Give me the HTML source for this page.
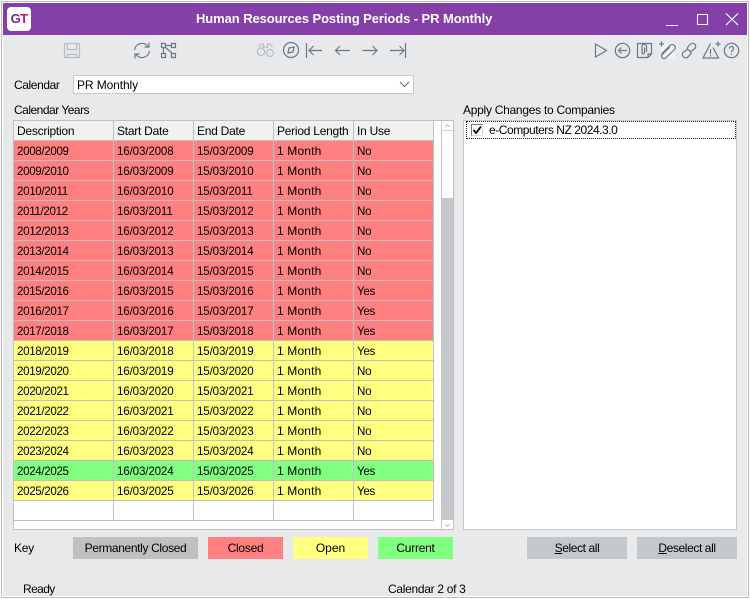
<!DOCTYPE html>
<html><head><meta charset="utf-8"><style>
html,body{margin:0;padding:0}
body{width:750px;height:599px;position:relative;overflow:hidden;background:#fff;font-family:"Liberation Sans",sans-serif;font-size:12px;color:#000}
div{position:absolute;box-sizing:border-box;white-space:nowrap}
svg{position:absolute;left:0;top:0}
table{position:absolute;left:14px;top:121px;border-collapse:separate;border-spacing:0;table-layout:fixed;width:420px}
td{height:20px;box-sizing:border-box;padding:1px 0 0 3px;border-right:1px solid #c0c0c0;border-bottom:1px solid #c0c0c0;font-size:11.6px;white-space:nowrap;overflow:hidden}
td:nth-child(1){letter-spacing:-.35px}
td:nth-child(2),td:nth-child(3){letter-spacing:-.15px}
td:nth-child(4){font-size:12px;letter-spacing:.15px}
td:nth-child(5){letter-spacing:-.3px}
tr.h td{background:#f0f0f0;font-size:12px;letter-spacing:-.25px;padding-top:0}
tr.r td{background:#ff8080}tr.y td{background:#ffff80}tr.g td{background:#80ff80}tr.w td{background:#fff}
.k{top:537px;height:22px;line-height:22px;text-align:center;font-size:12px;letter-spacing:-.25px}
.l{font-size:12px}
</style></head><body>
<div style="left:1px;top:1px;width:748px;height:597px;border:1px solid #bdbdbd"></div>
<div style="left:2px;top:2px;width:746px;height:595px;border:1px solid #fff;background:#e8e9eb"></div>
<div style="left:3px;top:3px;width:744px;height:32px;background:#8440a8"></div>
<div style="left:7px;top:7px;width:24px;height:24px;background:#fff;border-radius:4px"></div>
<div style="left:7px;top:7px;width:24px;height:24px;line-height:24px;text-align:center;font-weight:bold;font-size:13px;letter-spacing:-.6px"><span style="color:#6a2a9e">G</span><span style="color:#c0186e">T</span></div>
<div style="left:196px;top:10px;line-height:18px;color:#fff;font-weight:bold;font-size:13px;letter-spacing:-.08px">Human Resources Posting Periods - PR Monthly</div>

<svg width="750" height="599" fill="none" stroke-width="1.2">
<g stroke="#fff">
<path d="M666 25.500H678M697.500 14.500H707.500V24.500H697.500ZM726 13.500L738 25M738 13.500L726 25" stroke-width="1.100"/>
</g>
<path d="M660 43H675V58H660Z" fill="#f0f1f2"/>
<g stroke="#b9bec4">
<path d="M64.500 43.500H78.500L79.500 44.500V57.500H64.500Z"/><path d="M67.500 43.500V49.500H76.500V43.500M67.500 57.500V54.500H76.500V57.500"/>
<path d="M258.500 47L261 44H263.500V48M272.500 47L270 44H267.500V48M263.500 47H267.500M257.500 50.500A3.500 3.500 0 1 0 264.500 53A3.500 3.500 0 0 0 257.500 50.500ZM266.500 53A3.500 3.500 0 1 0 273.500 53A3.500 3.500 0 0 0 266.500 53Z"/>
</g>
<g stroke="#6b7785">
<path d="M134.500 50A7.500 7.500 0 0 1 148 46.500M149 42.500V47H144.500M149.500 51A7.500 7.500 0 0 1 136 54.500M135 58.500V54H139.500"/>
<path d="M161.500 43.500H165.500V47.500H161.500ZM171.500 43.500H175.500V47.500H171.500ZM161.500 53.500H165.500V57.500H161.500ZM171.500 53.500H175.500V57.500H171.500ZM165.500 45.500H171.500M163.500 47.500V53.500M165 47L172.500 53.500"/>
<circle cx="291" cy="50" r="7.500"/><path d="M288 53L289 48L294 47L293 52Z"/><path d="M291 42V43M291 57V58M283 50H284M298 50H299" stroke-width=".8"/>
<path d="M306.500 43V58M322 50.500H309M313.500 46L309 50.500L313.500 55"/>
<path d="M350 50.500H335.500M340 46L335.500 50.500L340 55"/>
<path d="M362.500 50.500H377M372.500 46L377 50.500L372.500 55"/>
<path d="M390 50.500H404M399.500 46L404 50.500L399.500 55M405.500 43V58"/>
<path d="M595.500 44L606.500 50.500L595.500 57Z"/>
<circle cx="622.500" cy="50.500" r="7.200"/><path d="M627 50.500H618.500M621.500 47.500L618.500 50.500L621.500 53.500"/>
<path d="M637.500 43.500H651.500V54L648 57.500H637.500ZM651.500 54H648V57.500"/><path d="M646.500 52V46.500A2 2 0 0 0 642 46.500V53A1.300 1.300 0 0 0 644.500 53V47.500"/>
<path d="M664 44H659M661.500 41.500V46.500M661.500 54L670 45.500A3 3 0 0 1 674.500 49.500L665.500 58A2.500 2.500 0 0 1 662 54.500L670 47"/>
<path d="M688 49L683.500 52A3.200 3.200 0 0 0 688 57L691 53.500A3 3 0 0 0 689 50.500" stroke-width="1.200"/><path d="M691 51.500L695 48.500A3.200 3.200 0 0 0 690.500 44L687.500 47.500A3 3 0 0 0 689 50.500" stroke-width="1.200"/>
<path d="M710.500 43.500L703 58H718.500L713 47.500M710.500 49V54M710.500 55V56.500M715.500 44H720.500M718 41.500V46.500"/>
<circle cx="731.500" cy="50.500" r="7.200"/><path d="M729.500 48.500A2 2 0 1 1 732 50.500Q731.500 51 731.500 52.500M731.500 54V55"/>
</g>
</svg>

<div class="l" style="left:14px;top:78px;line-height:15px;letter-spacing:-.4px">Calendar</div>
<div style="left:73px;top:75px;width:341px;height:19px;background:#fff;border:1px solid #c8c8c8;line-height:18px;padding-left:3px;letter-spacing:-.1px">PR Monthly</div>
<svg width="750" height="599" fill="none"><path d="M400 82L404.500 86.500L409 82" stroke="#666" stroke-width="1"/></svg>
<div class="l" style="left:14px;top:103px;line-height:15px;letter-spacing:-.5px">Calendar Years</div>
<div class="l" style="left:463px;top:103px;line-height:15px;letter-spacing:-.27px">Apply Changes to Companies</div>

<div style="left:13px;top:120px;width:441px;height:410px;background:#fff;border:1px solid #c0c0c0"></div>
<div style="left:441px;top:121px;width:1px;height:408px;background:#c4c7cb"></div>
<div style="left:442px;top:121px;width:11px;height:408px;background:#fff"></div>
<div style="left:442px;top:198px;width:11px;height:322px;background:#c4c7cb"></div>
<div style="left:442px;top:130px;width:11px;height:1px;background:#d0d0d0"></div>
<svg width="750" height="599" fill="none"><path d="M445 127L447.500 124.500L450 127M445 524L447.500 526.500L450 524" stroke="#c0c0c0" stroke-width="1"/></svg>

<table><colgroup><col style="width:100px"><col style="width:80px"><col style="width:80px"><col style="width:80px"><col style="width:80px"></colgroup>
<tr class="h"><td>Description</td><td>Start Date</td><td>End Date</td><td>Period Length</td><td>In Use</td></tr>
<tr class="r"><td>2008/2009</td><td>16/03/2008</td><td>15/03/2009</td><td>1 Month</td><td>No</td></tr>
<tr class="r"><td>2009/2010</td><td>16/03/2009</td><td>15/03/2010</td><td>1 Month</td><td>No</td></tr>
<tr class="r"><td>2010/2011</td><td>16/03/2010</td><td>15/03/2011</td><td>1 Month</td><td>No</td></tr>
<tr class="r"><td>2011/2012</td><td>16/03/2011</td><td>15/03/2012</td><td>1 Month</td><td>No</td></tr>
<tr class="r"><td>2012/2013</td><td>16/03/2012</td><td>15/03/2013</td><td>1 Month</td><td>No</td></tr>
<tr class="r"><td>2013/2014</td><td>16/03/2013</td><td>15/03/2014</td><td>1 Month</td><td>No</td></tr>
<tr class="r"><td>2014/2015</td><td>16/03/2014</td><td>15/03/2015</td><td>1 Month</td><td>No</td></tr>
<tr class="r"><td>2015/2016</td><td>16/03/2015</td><td>15/03/2016</td><td>1 Month</td><td>Yes</td></tr>
<tr class="r"><td>2016/2017</td><td>16/03/2016</td><td>15/03/2017</td><td>1 Month</td><td>Yes</td></tr>
<tr class="r"><td>2017/2018</td><td>16/03/2017</td><td>15/03/2018</td><td>1 Month</td><td>Yes</td></tr>
<tr class="y"><td>2018/2019</td><td>16/03/2018</td><td>15/03/2019</td><td>1 Month</td><td>Yes</td></tr>
<tr class="y"><td>2019/2020</td><td>16/03/2019</td><td>15/03/2020</td><td>1 Month</td><td>No</td></tr>
<tr class="y"><td>2020/2021</td><td>16/03/2020</td><td>15/03/2021</td><td>1 Month</td><td>No</td></tr>
<tr class="y"><td>2021/2022</td><td>16/03/2021</td><td>15/03/2022</td><td>1 Month</td><td>No</td></tr>
<tr class="y"><td>2022/2023</td><td>16/03/2022</td><td>15/03/2023</td><td>1 Month</td><td>No</td></tr>
<tr class="y"><td>2023/2024</td><td>16/03/2023</td><td>15/03/2024</td><td>1 Month</td><td>No</td></tr>
<tr class="g"><td>2024/2025</td><td>16/03/2024</td><td>15/03/2025</td><td>1 Month</td><td>Yes</td></tr>
<tr class="y"><td>2025/2026</td><td>16/03/2025</td><td>15/03/2026</td><td>1 Month</td><td>Yes</td></tr>
<tr class="w"><td>&nbsp;</td><td></td><td></td><td></td><td></td></tr>
</table>

<div style="left:463px;top:120px;width:274px;height:410px;background:#fff;border:1px solid #c8c8c8"></div>
<div style="left:466px;top:121px;width:270px;height:18px;border:1px dotted #222"></div>
<div style="left:471px;top:124px;width:12px;height:12px;background:#fff;border:1px solid #777;border-right-color:#ddd;border-bottom-color:#ddd"></div>
<svg width="750" height="599" fill="none"><path d="M473.500 130L476 133L481 126.500" stroke="#000" stroke-width="1.800"/></svg>
<div style="left:489px;top:123px;line-height:15px;font-size:12px;letter-spacing:-.45px">e-Computers NZ 2024.3.0</div>

<div class="l" style="left:14px;top:541px;line-height:15px;letter-spacing:-.3px">Key</div>
<div class="k" style="left:73px;width:125px;background:#c0c0c0;letter-spacing:-.35px">Permanently Closed</div>
<div class="k" style="left:208px;width:75px;background:#ff8080">Closed</div>
<div class="k" style="left:293px;width:75px;background:#ffff80;letter-spacing:0">Open</div>
<div class="k" style="left:378px;width:75px;background:#80ff80">Current</div>
<div class="k" style="left:527px;width:100px;background:#c4c7cb;letter-spacing:-.4px"><u>S</u>elect all</div>
<div class="k" style="left:637px;width:100px;background:#c4c7cb;letter-spacing:-.4px"><u>D</u>eselect all</div>
<div class="l" style="left:23px;top:582px;line-height:15px;letter-spacing:-.6px">Ready</div>
<div class="l" style="left:388px;top:582px;line-height:15px;letter-spacing:-.3px">Calendar 2 of 3</div>
</body></html>
